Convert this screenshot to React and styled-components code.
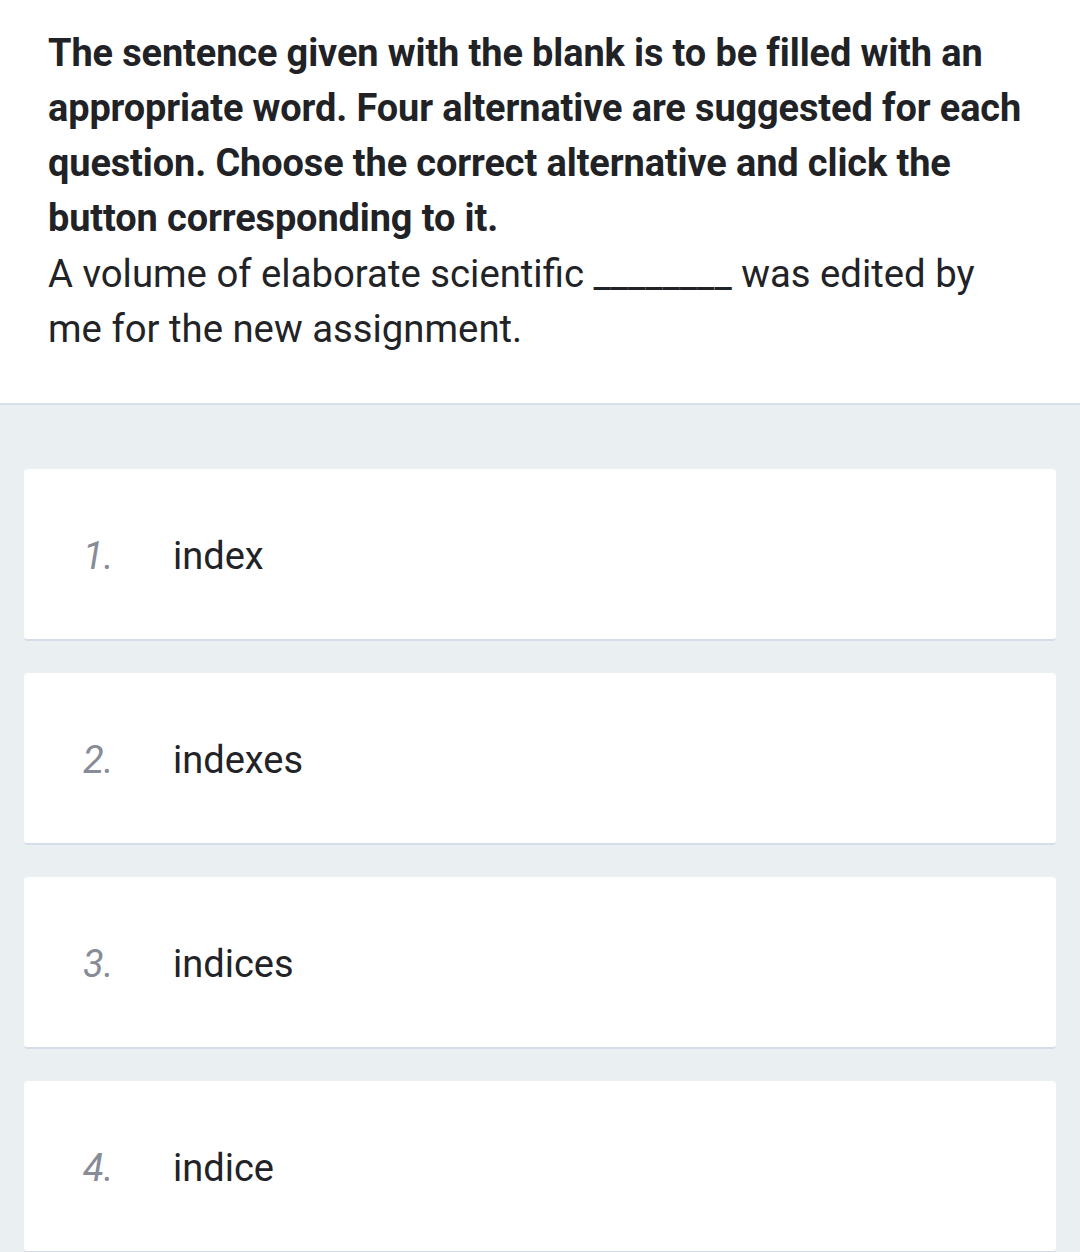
import React from "react";
import styled, { createGlobalStyle } from "styled-components";

const Global = createGlobalStyle`
  html, body { margin: 0; padding: 0; background: #eaeff2; }
  body { font-family: Roboto, "Noto Sans", sans-serif; }
`;

const Page = styled.div`
  width: 1080px;
  min-height: 1252px;
  background: #eaeff2;
`;

const Header = styled.div`
  background: #ffffff;
  padding: 26px 48px 47px;
  border-bottom: 2px solid #d9dfe8;
`;

const Instruction = styled.div`
  font-size: 37.9px;
  font-weight: 700;
  line-height: 55px;
  color: #212226;
  letter-spacing: -0.1px;
`;

const Question = styled.div`
  font-size: 38.3px;
  font-weight: 400;
  line-height: 55px;
  color: #222327;
`;

const List = styled.div`
  display: flex;
  flex-direction: column;
  gap: 32px;
  padding: 64px 24px 0;
`;

const Card = styled.div`
  display: flex;
  align-items: center;
  height: 172px;
  padding-top: 4px;
  box-sizing: border-box;
  background: #ffffff;
  border-radius: 4px;
  border-bottom: 2px solid #d6dce7;
`;

const Num = styled.span`
  width: 149px;
  padding-left: 59px;
  box-sizing: border-box;
  font-size: 38px;
  font-style: italic;
  color: #878c96;
`;

const Option = styled.span`
  font-size: 38px;
  color: #222327;
`;

const options = ["index", "indexes", "indices", "indice"];

export default function App() {
  return (
    <Page>
      <Global />
      <Header>
        <Instruction>
          The sentence given with the blank is to be filled with an appropriate word. Four alternative are suggested for each question. Choose the correct alternative and click the button corresponding to it.
        </Instruction>
        <Question>
          A volume of elaborate scientific ________ was edited by me for the new assignment.
        </Question>
      </Header>
      <List>
        {options.map((o, i) => (
          <Card key={o}>
            <Num>{i + 1}.</Num>
            <Option>{o}</Option>
          </Card>
        ))}
      </List>
    </Page>
  );
}
